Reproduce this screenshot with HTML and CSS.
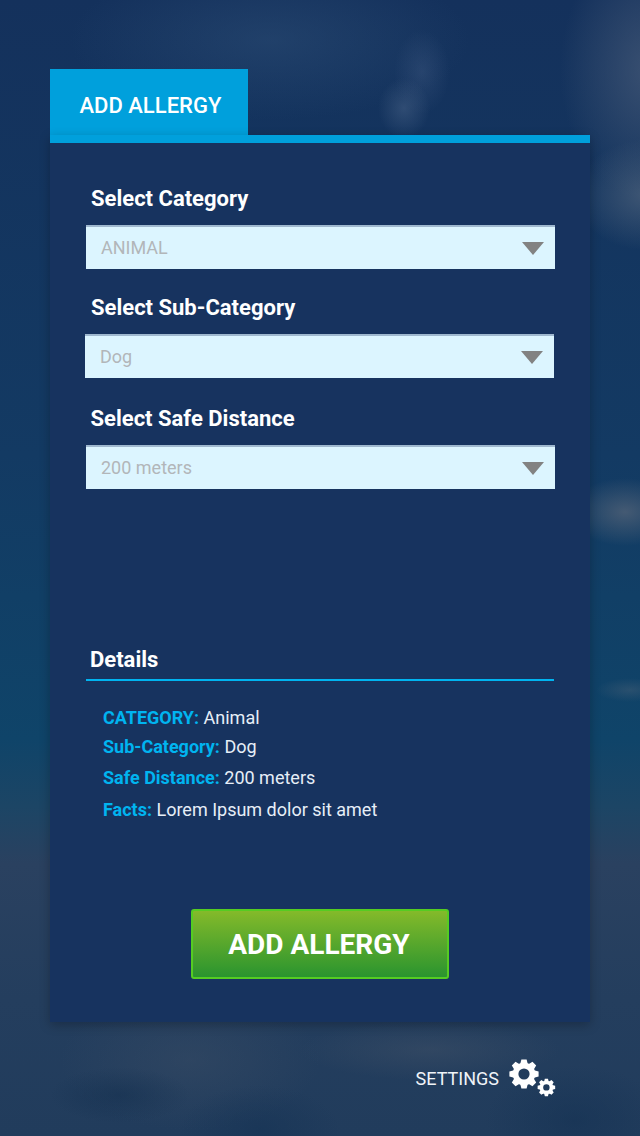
FILE: index.html
```html
<!DOCTYPE html>
<html lang="en">
<head>
<meta charset="utf-8">
<title>Add Allergy</title>
<link rel="stylesheet" href="styles.css">
</head>
<body>
<div class="screen">
  <main class="panel">
    <h1 class="tab">ADD ALLERGY</h1>
    <div class="card">
      <section class="selects">
        <div class="group">
          <label class="label">Select Category</label>
          <div class="select"><span>ANIMAL</span><i class="caret"></i></div>
        </div>
        <div class="group group-sub">
          <label class="label label-sub">Select Sub-Category</label>
          <div class="select"><span>Dog</span><i class="caret"></i></div>
        </div>
        <div class="group group-dist">
          <label class="label label-dist">Select Safe Distance</label>
          <div class="select"><span>200 meters</span><i class="caret"></i></div>
        </div>
      </section>
      <section class="details">
        <h2 class="details-title">Details</h2>
        <p class="row r1"><b>CATEGORY:</b> Animal</p>
        <p class="row r2"><b>Sub-Category:</b> Dog</p>
        <p class="row r3"><b>Safe Distance:</b> 200 meters</p>
        <p class="row r4"><b>Facts:</b> Lorem Ipsum dolor sit amet</p>
      </section>
      <button class="add">ADD ALLERGY</button>
    </div>
  </main>
  <footer class="settings">
    <span>SETTINGS</span>
    <svg class="gears" width="48" height="48" viewBox="0 0 48 48">
      <defs>
        <g id="teeth">
          <polygon id="t" points="-2.6,-14.6 2.6,-14.6 3.8,-10 3.8,10 2.6,14.6 -2.6,14.6 -3.8,10 -3.8,-10"/>
          <use href="#t" transform="rotate(45)"/>
          <use href="#t" transform="rotate(90)"/>
          <use href="#t" transform="rotate(135)"/>
          <circle r="11.2"/>
        </g>
        <mask id="holes" maskUnits="userSpaceOnUse" x="0" y="0" width="48" height="48">
          <rect width="48" height="48" fill="#fff"/>
          <circle cx="16" cy="24" r="5.6" fill="#000"/>
          <circle cx="38.4" cy="37.4" r="3.2" fill="#000"/>
        </mask>
      </defs>
      <g fill="#fff" mask="url(#holes)">
        <use href="#teeth" transform="translate(16 24)"/>
        <use href="#teeth" transform="translate(38.4 37.4) scale(.6)"/>
      </g>
    </svg>
  </footer>
</div>
</body>
</html>
```
FILE: styles.css
```css
* { box-sizing: border-box; }
html, body { margin: 0; padding: 0; }
body { font-family: Roboto, "Liberation Sans", sans-serif; color: #fff; }
.screen {
  width: 640px; height: 1136px; overflow: hidden;
  padding: 69px 50px 0;
  background:
    radial-gradient(ellipse 26px 30px at 404px 108px, rgba(85,110,145,.42), transparent 100%),
    radial-gradient(ellipse 28px 42px at 422px 72px, rgba(75,100,140,.32), transparent 100%),
    radial-gradient(ellipse 70px 55px at 645px 195px, rgba(80,100,125,.7), transparent 100%),
    radial-gradient(ellipse 90px 130px at 650px 70px, rgba(70,90,120,.75), transparent 100%),
    radial-gradient(ellipse 55px 34px at 625px 512px, rgba(85,100,120,.75), transparent 100%),
    radial-gradient(ellipse 34px 12px at 630px 690px, rgba(80,100,120,.4), transparent 100%),
    radial-gradient(ellipse 70px 28px at 120px 1095px, rgba(18,46,78,.5), transparent 100%),
    radial-gradient(ellipse 90px 55px at 575px 1120px, rgba(18,48,82,.5), transparent 100%),
    radial-gradient(ellipse 80px 45px at 260px 1130px, rgba(20,50,84,.55), transparent 100%),
    radial-gradient(ellipse 130px 30px at 430px 1050px, rgba(70,85,105,.4), transparent 100%),
    radial-gradient(ellipse 130px 70px at 190px 1060px, rgba(62,80,103,.4), transparent 100%),
    radial-gradient(ellipse 200px 80px at 270px 40px, rgba(48,82,122,.45), transparent 100%),
    linear-gradient(180deg, #14315c 0%, #133a63 40%, #0f4469 65%, #1c4565 71%, #2a4160 76%, #243e5e 88%, #213c5c 100%);
}
.panel { width: 540px; height: 953px; display: flex; flex-direction: column; }
.tab {
  margin: 0; width: 198px; height: 66px; flex: none;
  background: #00a0dc; padding: 0 0 0 29.5px;
  font-size: 22px; font-weight: 500; line-height: 73px; color: #fff;
}
.card {
  flex: 1; background: #17335f; border-top: 8px solid #00a0dc;
  padding: 0 35px 0 36px; display: flex; flex-direction: column;
  box-shadow: 0 3px 10px rgba(0,0,0,.25);
}
.selects { padding-top: 42px; height: 503px; }
.label { display: block; font-size: 22px; font-weight: 700; line-height: 28px; margin: 0 0 12px 5px; }
.label-sub { margin-left: 6px; }
.label-dist { margin-left: 4.5px; }
.group { margin-bottom: 25px; }
.group-sub { margin-left: -1px; margin-right: 1px; margin-bottom: 27px; }
.select {
  height: 44px; background: #dcf5ff; border-top: 2px solid #9fb8cf;
  display: flex; align-items: center; justify-content: space-between;
  padding: 0 11px 0 15px; font-size: 18px; color: #b2b6b9;
}
.select span { margin-top: -2px; }
.caret { width: 0; height: 0; border-left: 11px solid transparent; border-right: 11px solid transparent; border-top: 13px solid #828282; }
.details { height: 263px; }
.details-title { margin: 0 1px 0 0; padding: 0 0 5px 4px; font-size: 22px; font-weight: 700; line-height: 28px; border-bottom: 2px solid #00b4f0; }
.row { margin: 0 0 0 17px; font-size: 18px; line-height: 24px; color: #e6eef7; }
.row b { color: #00b4f0; font-weight: 700; }
.r1 { margin-top: 25px; }
.r2 { margin-top: 5px; }
.r3 { margin-top: 7px; }
.r4 { margin-top: 8px; }
.add {
  align-self: center; margin-right: 1px; width: 258px; height: 70px;
  border: 2px solid #55cc22; border-radius: 3px;
  background: linear-gradient(180deg, #84ba2a 0%, #2a942f 100%);
  color: #fff; font: 700 28px Roboto, sans-serif; padding: 0 2px 0 0;
}
.settings { display: flex; align-items: flex-start; justify-content: flex-end; gap: 9px; margin: 41px 34px 0 0; font-size: 18px; color: #f0f4f8; line-height: 24px; }
.settings span { margin-top: 4px; }
.gears { flex: none; margin-top: -13px; }
```
